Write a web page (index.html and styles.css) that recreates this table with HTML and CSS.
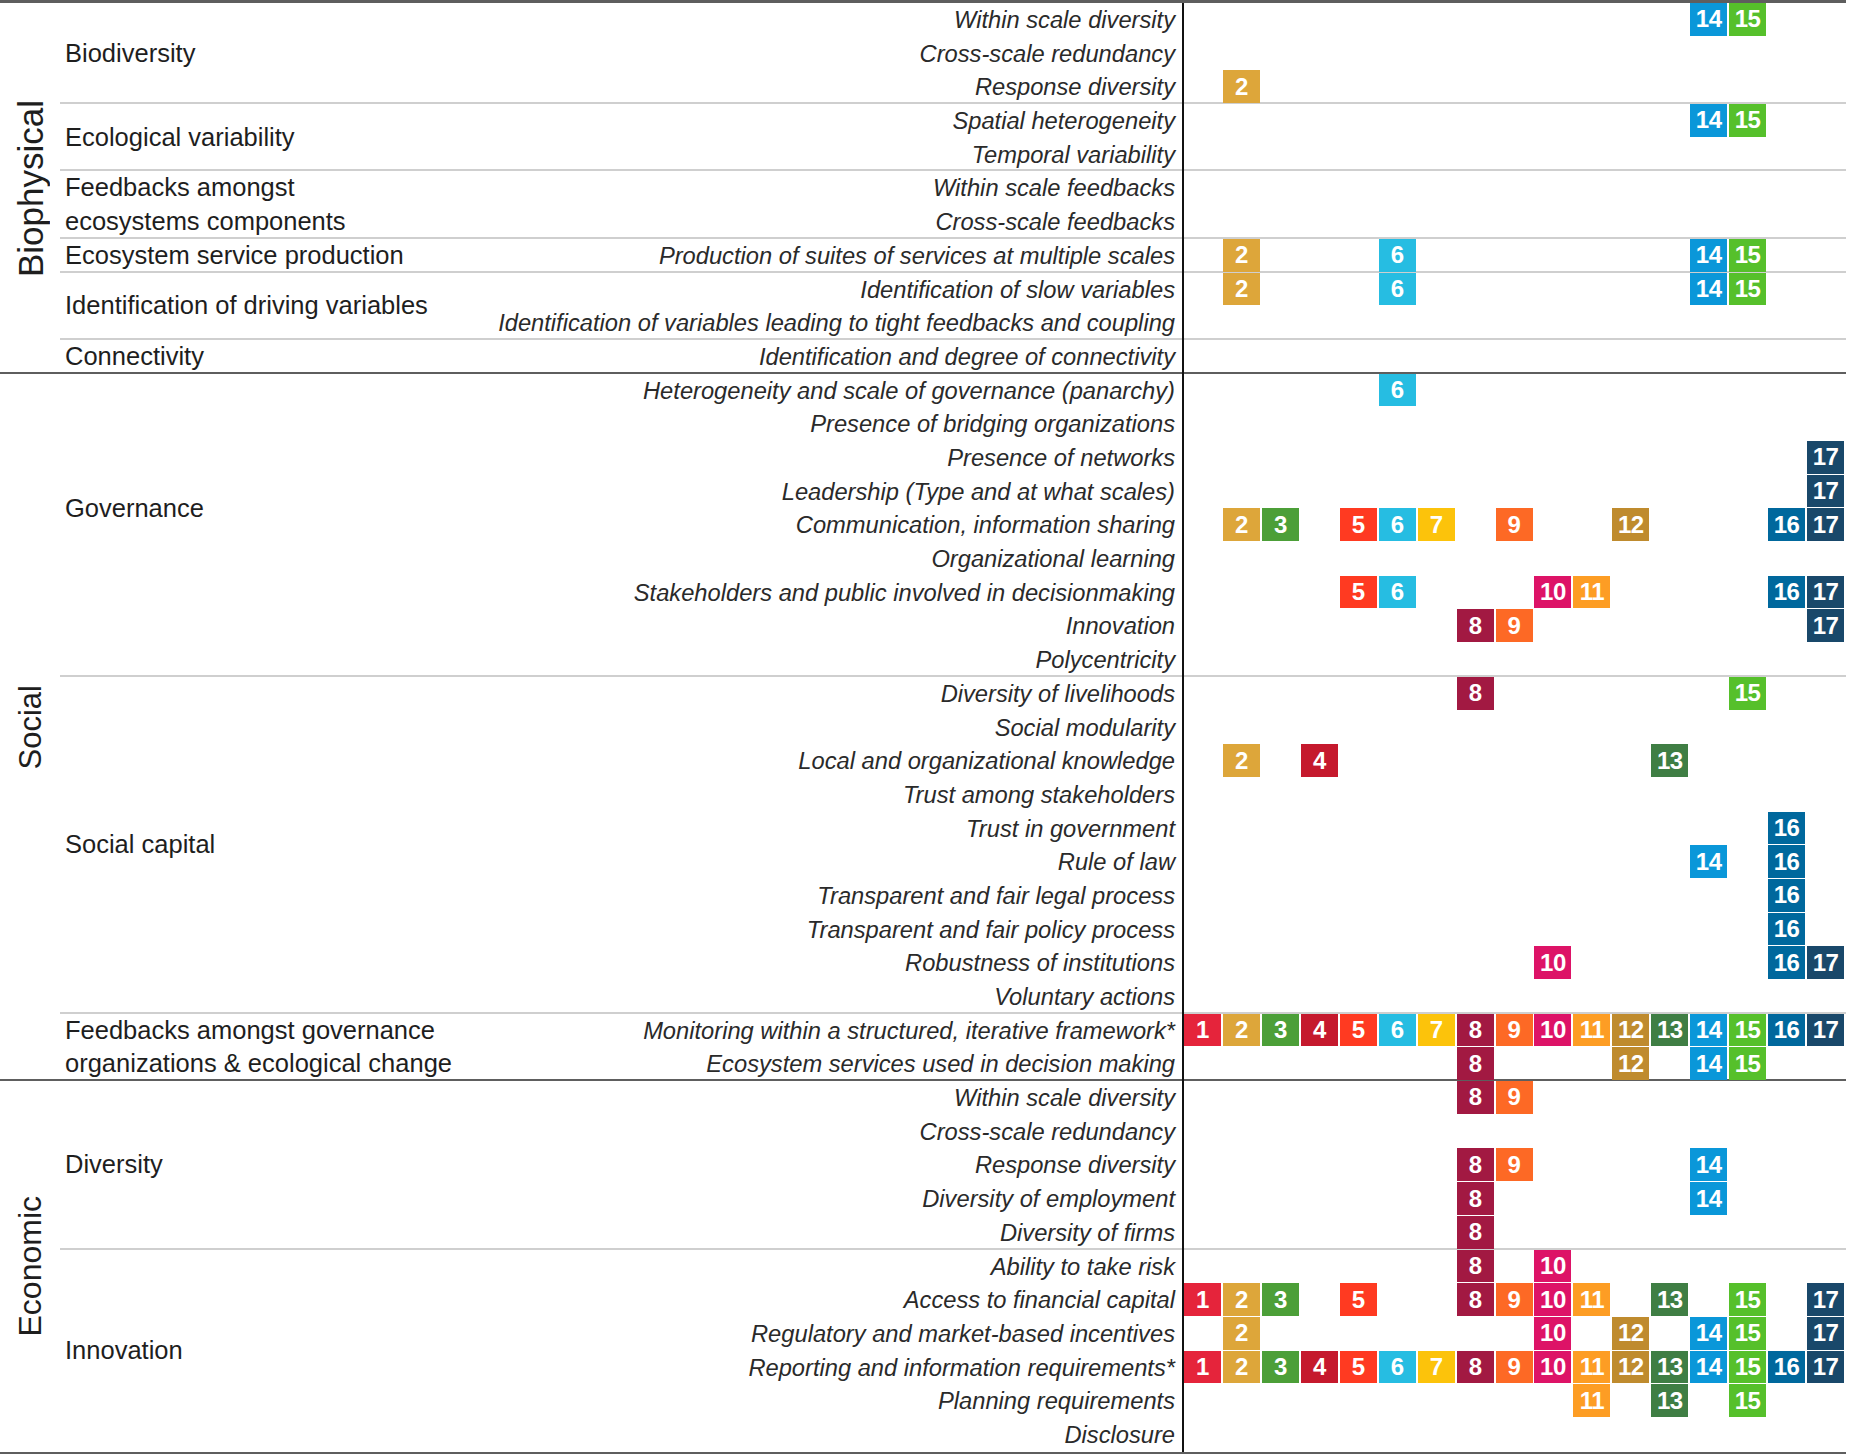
FILE: index.html
```html
<!DOCTYPE html>
<html lang="en">
<head>
<meta charset="utf-8">
<title>Resilience attributes and SDGs</title>
<link rel="stylesheet" href="styles.css">
</head>
<body>
<div class="table">

  <section class="group">
    <div class="glabel"><span class="g-bio">Biophysical</span></div>
    <div class="cats">
      <div class="cat">
        <div class="cname">Biodiversity</div>
        <div class="rows">
          <div class="row"><div class="ind">Within scale diversity</div><div class="tiles"><span class="t s14">14</span><span class="t s15">15</span></div></div>
          <div class="row"><div class="ind">Cross-scale redundancy</div><div class="tiles"></div></div>
          <div class="row"><div class="ind">Response diversity</div><div class="tiles"><span class="t s2">2</span></div></div>
        </div>
      </div>
      <div class="cat">
        <div class="cname">Ecological variability</div>
        <div class="rows">
          <div class="row"><div class="ind">Spatial heterogeneity</div><div class="tiles"><span class="t s14">14</span><span class="t s15">15</span></div></div>
          <div class="row"><div class="ind">Temporal variability</div><div class="tiles"></div></div>
        </div>
      </div>
      <div class="cat">
        <div class="cname">Feedbacks amongst<br>ecosystems components</div>
        <div class="rows">
          <div class="row"><div class="ind">Within scale feedbacks</div><div class="tiles"></div></div>
          <div class="row"><div class="ind">Cross-scale feedbacks</div><div class="tiles"></div></div>
        </div>
      </div>
      <div class="cat">
        <div class="cname">Ecosystem service production</div>
        <div class="rows">
          <div class="row"><div class="ind">Production of suites of services at multiple scales</div><div class="tiles"><span class="t s2">2</span><span class="t s6">6</span><span class="t s14">14</span><span class="t s15">15</span></div></div>
        </div>
      </div>
      <div class="cat">
        <div class="cname">Identification of driving variables</div>
        <div class="rows">
          <div class="row"><div class="ind">Identification of slow variables</div><div class="tiles"><span class="t s2">2</span><span class="t s6">6</span><span class="t s14">14</span><span class="t s15">15</span></div></div>
          <div class="row"><div class="ind">Identification of variables leading to tight feedbacks and coupling</div><div class="tiles"></div></div>
        </div>
      </div>
      <div class="cat">
        <div class="cname">Connectivity</div>
        <div class="rows">
          <div class="row"><div class="ind">Identification and degree of connectivity</div><div class="tiles"></div></div>
        </div>
      </div>
    </div>
  </section>

  <section class="group">
    <div class="glabel"><span class="g-soc">Social</span></div>
    <div class="cats">
      <div class="cat">
        <div class="cname raised">Governance</div>
        <div class="rows">
          <div class="row"><div class="ind">Heterogeneity and scale of governance (panarchy)</div><div class="tiles"><span class="t s6">6</span></div></div>
          <div class="row"><div class="ind">Presence of bridging organizations</div><div class="tiles"></div></div>
          <div class="row"><div class="ind">Presence of networks</div><div class="tiles"><span class="t s17">17</span></div></div>
          <div class="row"><div class="ind">Leadership (Type and at what scales)</div><div class="tiles"><span class="t s17">17</span></div></div>
          <div class="row"><div class="ind">Communication, information sharing</div><div class="tiles"><span class="t s2">2</span><span class="t s3">3</span><span class="t s5">5</span><span class="t s6">6</span><span class="t s7">7</span><span class="t s9">9</span><span class="t s12">12</span><span class="t s16">16</span><span class="t s17">17</span></div></div>
          <div class="row"><div class="ind">Organizational learning</div><div class="tiles"></div></div>
          <div class="row"><div class="ind">Stakeholders and public involved in decisionmaking</div><div class="tiles"><span class="t s5">5</span><span class="t s6">6</span><span class="t s10">10</span><span class="t s11">11</span><span class="t s16">16</span><span class="t s17">17</span></div></div>
          <div class="row"><div class="ind">Innovation</div><div class="tiles"><span class="t s8">8</span><span class="t s9">9</span><span class="t s17">17</span></div></div>
          <div class="row"><div class="ind">Polycentricity</div><div class="tiles"></div></div>
        </div>
      </div>
      <div class="cat">
        <div class="cname">Social capital</div>
        <div class="rows">
          <div class="row"><div class="ind">Diversity of livelihoods</div><div class="tiles"><span class="t s8">8</span><span class="t s15">15</span></div></div>
          <div class="row"><div class="ind">Social modularity</div><div class="tiles"></div></div>
          <div class="row"><div class="ind">Local and organizational knowledge</div><div class="tiles"><span class="t s2">2</span><span class="t s4">4</span><span class="t s13">13</span></div></div>
          <div class="row"><div class="ind">Trust among stakeholders</div><div class="tiles"></div></div>
          <div class="row"><div class="ind">Trust in government</div><div class="tiles"><span class="t s16">16</span></div></div>
          <div class="row"><div class="ind">Rule of law</div><div class="tiles"><span class="t s14">14</span><span class="t s16">16</span></div></div>
          <div class="row"><div class="ind">Transparent and fair legal process</div><div class="tiles"><span class="t s16">16</span></div></div>
          <div class="row"><div class="ind">Transparent and fair policy process</div><div class="tiles"><span class="t s16">16</span></div></div>
          <div class="row"><div class="ind">Robustness of institutions</div><div class="tiles"><span class="t s10">10</span><span class="t s16">16</span><span class="t s17">17</span></div></div>
          <div class="row"><div class="ind">Voluntary actions</div><div class="tiles"></div></div>
        </div>
      </div>
      <div class="cat">
        <div class="cname">Feedbacks amongst governance<br>organizations &amp; ecological change</div>
        <div class="rows">
          <div class="row"><div class="ind">Monitoring within a structured, iterative framework*</div><div class="tiles"><span class="t s1">1</span><span class="t s2">2</span><span class="t s3">3</span><span class="t s4">4</span><span class="t s5">5</span><span class="t s6">6</span><span class="t s7">7</span><span class="t s8">8</span><span class="t s9">9</span><span class="t s10">10</span><span class="t s11">11</span><span class="t s12">12</span><span class="t s13">13</span><span class="t s14">14</span><span class="t s15">15</span><span class="t s16">16</span><span class="t s17">17</span></div></div>
          <div class="row"><div class="ind">Ecosystem services used in decision making</div><div class="tiles"><span class="t s8">8</span><span class="t s12">12</span><span class="t s14">14</span><span class="t s15">15</span></div></div>
        </div>
      </div>
    </div>
  </section>

  <section class="group">
    <div class="glabel"><span class="g-eco">Economic</span></div>
    <div class="cats">
      <div class="cat">
        <div class="cname">Diversity</div>
        <div class="rows">
          <div class="row"><div class="ind">Within scale diversity</div><div class="tiles"><span class="t s8">8</span><span class="t s9">9</span></div></div>
          <div class="row"><div class="ind">Cross-scale redundancy</div><div class="tiles"></div></div>
          <div class="row"><div class="ind">Response diversity</div><div class="tiles"><span class="t s8">8</span><span class="t s9">9</span><span class="t s14">14</span></div></div>
          <div class="row"><div class="ind">Diversity of employment</div><div class="tiles"><span class="t s8">8</span><span class="t s14">14</span></div></div>
          <div class="row"><div class="ind">Diversity of firms</div><div class="tiles"><span class="t s8">8</span></div></div>
        </div>
      </div>
      <div class="cat">
        <div class="cname">Innovation</div>
        <div class="rows">
          <div class="row"><div class="ind">Ability to take risk</div><div class="tiles"><span class="t s8">8</span><span class="t s10">10</span></div></div>
          <div class="row"><div class="ind">Access to financial capital</div><div class="tiles"><span class="t s1">1</span><span class="t s2">2</span><span class="t s3">3</span><span class="t s5">5</span><span class="t s8">8</span><span class="t s9">9</span><span class="t s10">10</span><span class="t s11">11</span><span class="t s13">13</span><span class="t s15">15</span><span class="t s17">17</span></div></div>
          <div class="row"><div class="ind">Regulatory and market-based incentives</div><div class="tiles"><span class="t s2">2</span><span class="t s10">10</span><span class="t s12">12</span><span class="t s14">14</span><span class="t s15">15</span><span class="t s17">17</span></div></div>
          <div class="row"><div class="ind">Reporting and information requirements*</div><div class="tiles"><span class="t s1">1</span><span class="t s2">2</span><span class="t s3">3</span><span class="t s4">4</span><span class="t s5">5</span><span class="t s6">6</span><span class="t s7">7</span><span class="t s8">8</span><span class="t s9">9</span><span class="t s10">10</span><span class="t s11">11</span><span class="t s12">12</span><span class="t s13">13</span><span class="t s14">14</span><span class="t s15">15</span><span class="t s16">16</span><span class="t s17">17</span></div></div>
          <div class="row"><div class="ind">Planning requirements</div><div class="tiles"><span class="t s11">11</span><span class="t s13">13</span><span class="t s15">15</span></div></div>
          <div class="row"><div class="ind">Disclosure</div><div class="tiles"></div></div>
        </div>
      </div>
    </div>
  </section>

</div>
</body>
</html>
```

FILE: styles.css
```css
* { box-sizing: border-box; }

html, body {
  margin: 0;
  padding: 0;
  background: #ffffff;
}

body {
  font-family: "Liberation Sans", Arial, sans-serif;
  color: #222;
}

.table {
  width: 1846px;
  border-top: 3px solid #5e5e5e;
  border-bottom: 2px solid #5e5e5e;
}

.group {
  display: flex;
}

.group + .group {
  border-top: 2px solid #5e5e5e;
  margin-top: -2px;
}

.glabel {
  width: 60px;
  flex: 0 0 60px;
  display: flex;
  align-items: center;
  justify-content: center;
}

.glabel span {
  writing-mode: vertical-rl;
  transform: rotate(180deg);
  font-size: 31px;
  line-height: 1;
  color: #1e1e1e;
  white-space: nowrap;
}

.glabel .g-bio { font-size: 35px; }
.glabel .g-soc { font-size: 31px; }
.glabel .g-eco { font-size: 32px; }

.cats {
  width: 1786px;
}

.cat {
  display: flex;
}

.cat + .cat {
  border-top: 2px solid #cfcfcf;
  margin-top: -2px;
}

.cname {
  flex: 0 0 435px;
  display: flex;
  align-items: center;
  padding-left: 5px;
  font-size: 25.5px;
  line-height: 33.7px;
  color: #1e1e1e;
  white-space: nowrap;
}

.cname.raised {
  padding-bottom: 33.7px;
}

.rows {
  flex: 0 0 1351px;
  display: flex;
  flex-direction: column;
}

.row {
  display: flex;
  height: 33.7px;
}

.ind {
  flex: 0 0 680px;
  text-align: right;
  font-style: italic;
  font-size: 23.7px;
  line-height: 33.7px;
  padding-top: 1px;
  color: #2a2a2a;
  white-space: nowrap;
}

.tiles {
  margin-left: 7px;
  flex: 0 0 664px;
  border-left: 2px solid #111;
  display: grid;
  grid-template-columns: repeat(17, 37px);
  grid-template-rows: 32.7px;
  column-gap: 1.94px;
  align-items: start;
}

.t {
  grid-row: 1;
  height: 32.7px;
  display: flex;
  align-items: center;
  justify-content: center;
  color: #ffffff;
  font-weight: bold;
  font-size: 24px;
  letter-spacing: -0.5px;
  line-height: 1;
}

.s1  { grid-column: 1;  background: #e5243b; }
.s2  { grid-column: 2;  background: #dda63a; }
.s3  { grid-column: 3;  background: #4c9f38; }
.s4  { grid-column: 4;  background: #c5192d; }
.s5  { grid-column: 5;  background: #ff3a21; }
.s6  { grid-column: 6;  background: #26bde2; }
.s7  { grid-column: 7;  background: #fcc30b; }
.s8  { grid-column: 8;  background: #a21942; }
.s9  { grid-column: 9;  background: #fd6925; }
.s10 { grid-column: 10; background: #dd1367; }
.s11 { grid-column: 11; background: #fd9d24; }
.s12 { grid-column: 12; background: #bf8b2e; }
.s13 { grid-column: 13; background: #3f7e44; }
.s14 { grid-column: 14; background: #0a97d9; }
.s15 { grid-column: 15; background: #56c02b; }
.s16 { grid-column: 16; background: #00689d; }
.s17 { grid-column: 17; background: #19486a; }
```
